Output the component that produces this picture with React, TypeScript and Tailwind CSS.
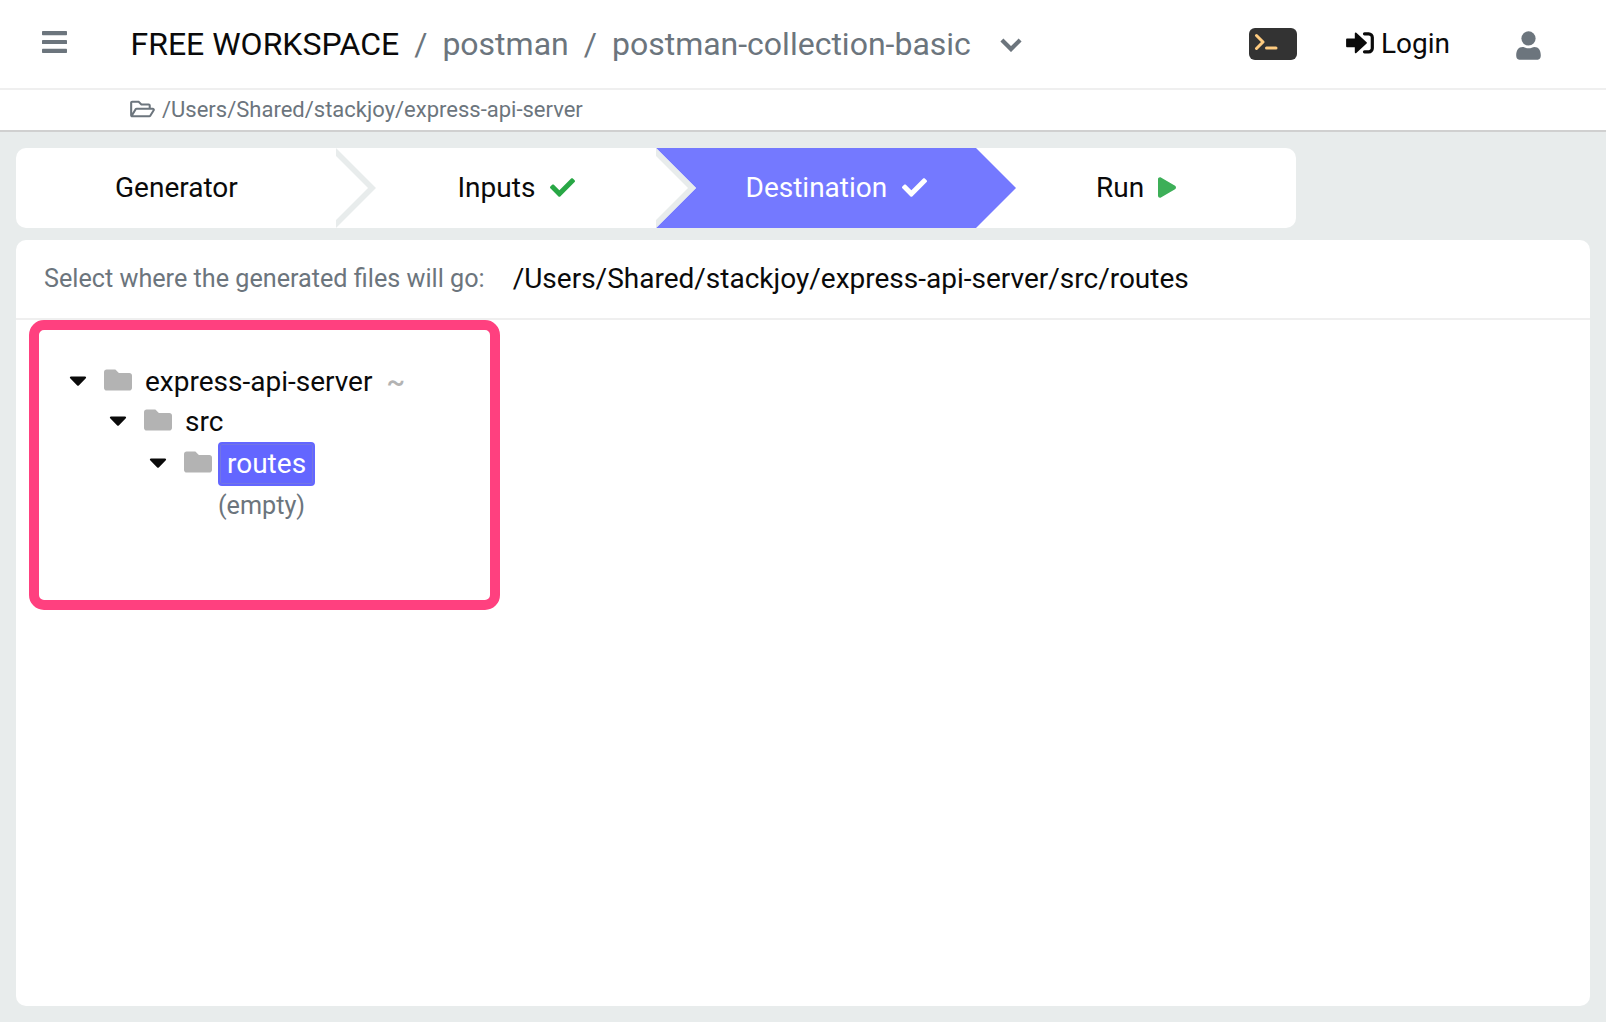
import type { ReactNode } from 'react'
import { FaRegFolderOpen, FaCaretDown, FaFolder, FaCheck, FaPlay } from 'react-icons/fa'

function StepArrow({ active = false }: { active?: boolean }) {
  return (
    <svg className="absolute left-full top-0 z-10" width="40" height="80" viewBox="0 0 40 80">
      {active ? (
        <path d="M0 0L40 40L0 80Z" fill="#7479ff" />
      ) : (
        <path d="M0 0L40 40L0 80V72L32 40L0 8Z" fill="#e8ecec" />
      )}
    </svg>
  )
}

function Step({ className, arrow, children }: { className: string; arrow?: ReactNode; children: ReactNode }) {
  return (
    <div className={`relative flex h-20 w-80 items-center whitespace-pre text-[28px] leading-none ${className}`}>
      {children}
      {arrow}
    </div>
  )
}

function Row({ className, children }: { className: string; children: ReactNode }) {
  return (
    <div className={`flex items-center whitespace-pre ${className}`}>
      <FaCaretDown className="-mt-1 size-7 shrink-0" />
      <FaFolder className="-mt-1 ml-3 size-7 shrink-0 text-[#b3b3b3]" />
      {children}
    </div>
  )
}

function MenuIcon() {
  return (
    <svg className="-mt-1 ml-[42px]" width="25" height="22" viewBox="0 0 25 22" fill="currentColor">
      <rect width="25" height="4.200" rx="0.700" />
      <rect y="8.900" width="25" height="4.200" rx="0.700" />
      <rect y="17.800" width="25" height="4.200" rx="0.700" />
    </svg>
  )
}

function LoginIcon() {
  return (
    <svg className="-mt-[3px]" width="28" height="22" viewBox="0 0 28 22">
      <path
        d="M1 7.500H9.700V1.500L20 10.900L9.700 20.300V14.300H1Z"
        fill="currentColor"
        stroke="currentColor"
        strokeWidth="1.800"
        strokeLinejoin="round"
      />
      <path
        d="M18.500 1.800H22.700A3.600 3.600 0 0 1 26.300 5.400V16.200A3.600 3.600 0 0 1 22.700 19.800H18.500"
        fill="none"
        stroke="currentColor"
        strokeWidth="3.200"
        strokeLinecap="round"
      />
    </svg>
  )
}

function UserIcon() {
  return (
    <svg className="mt-[3px] mr-[65px] ml-[66px]" width="25" height="29" viewBox="0 0 25 29" fill="currentColor">
      <circle cx="12.500" cy="7.400" r="7.100" />
      <path d="M6.500 15.900C8.500 15.900 9.800 17.300 12.500 17.300S16.500 15.900 18.500 15.900C22.500 15.900 24.800 19.300 24.800 24.600C24.800 27.300 23.600 28.700 21.800 28.700H3.200C1.400 28.700 0.200 27.300 0.200 24.600C0.200 19.300 2.500 15.900 6.500 15.900Z" />
    </svg>
  )
}

export default function App() {
  return (
    <div className="flex h-[1022px] w-[1606px] flex-col overflow-hidden bg-[#e8ecec] font-['Roboto',sans-serif] text-[#0a0a0a]">
      <header className="flex h-[90px] shrink-0 items-center border-b-2 border-[#efefef] bg-white whitespace-pre text-[#6c757d]">
        <MenuIcon />
        <div className="ml-[63.5px] flex items-center text-[32px] leading-none">
          <span className="text-[#0a0a0a]">FREE WORKSPACE</span>
          <span className="ml-[15px]">/</span>
          <span className="ml-[15px]">postman</span>
          <span className="ml-[15px]">/</span>
          <span className="ml-[15px]">postman-collection-basic</span>
        </div>
        <svg className="ml-[29px] mt-0.5" width="22" height="14" viewBox="0 0 22 14" fill="none" stroke="currentColor" strokeWidth="4.200">
          <path d="M1.900 2L11 11.100L20.100 2" />
        </svg>
        <svg className="ml-auto" width="48" height="32" viewBox="0 0 48 32" fill="none" stroke="#ffcc80" strokeWidth="3" strokeLinecap="round" strokeLinejoin="round">
          <rect width="48" height="32" rx="6" fill="#333" stroke="none" />
          <path d="M7.500 7.500L14 14L7.500 20.500M17.500 20H27" />
        </svg>
        <div className="ml-[49px] flex items-center text-[28px] leading-none text-[#0a0a0a]">
          <LoginIcon />
          <span className="ml-[7px]">Login</span>
        </div>
        <UserIcon />
      </header>

      <div className="flex h-[42px] shrink-0 items-center border-b-2 border-[#d0d0d0] bg-white pl-[130px] text-[22px] leading-none text-[#6c757d]">
        <FaRegFolderOpen className="-mt-[3px] h-[22px] w-[25px]" />
        <span className="ml-[7px]">/Users/Shared/stackjoy/express-api-server</span>
      </div>

      <nav className="mt-4 ml-4 flex w-[1280px] overflow-hidden rounded-[10px] bg-white">
        <Step className="pl-[99px]" arrow={<StepArrow />}>Generator</Step>
        <Step className="pl-[121.5px]" arrow={<StepArrow />}>
          Inputs
          <FaCheck className="-mt-0.5 ml-[14.5px] size-[25px] text-[#28a745]" />
        </Step>
        <Step className="bg-[#7479ff] pl-[89.5px] text-white [clip-path:polygon(0_0,376px_0,376px_100%,0_100%,40px_50%)]" arrow={<StepArrow active />}>
          Destination
          <FaCheck className="-mt-0.5 ml-[14.5px] size-[25px]" />
        </Step>
        <Step className="pl-[120px]">
          Run
          <FaPlay className="-mt-px ml-[14px] h-[21px] w-[18px] text-[#3daf58]" />
        </Step>
      </nav>

      <main className="mx-4 mt-3 flex h-[766px] flex-col rounded-[10px] bg-white">
        <div className="flex h-20 items-center border-b-2 border-[#efefef] pl-7 whitespace-pre leading-none">
          <span className="text-[25.2px] text-[#6c757d]">Select where the generated files will go:</span>
          <span className="ml-7 text-[28px]">/Users/Shared/stackjoy/express-api-server/src/routes</span>
        </div>
        <section className="ml-[13px] h-[290px] w-[471px] rounded-[15px] border-[10px] border-[#ff407f] pt-8 text-[28px] leading-none">
          <Row className="h-10 pl-[25px]">
            <span className="ml-[13px]">express-api-server</span>
            <span className="ml-[14px] font-medium text-[#b3b3b3]">~</span>
          </Row>
          <Row className="h-10 pl-[65px]">
            <span className="ml-[13px]">src</span>
          </Row>
          <Row className="h-11 pl-[105px]">
            <span className="ml-1.5 flex h-11 items-center rounded-[4px] border-2 border-[#6366ff] bg-[#6366ff] px-[7px] text-white inset-ring inset-ring-[#7275e4]">routes</span>
          </Row>
          <div className="flex h-10 items-center pl-[179px] text-[25.2px] text-[#6c757d]">(empty)</div>
        </section>
      </main>
    </div>
  )
}
